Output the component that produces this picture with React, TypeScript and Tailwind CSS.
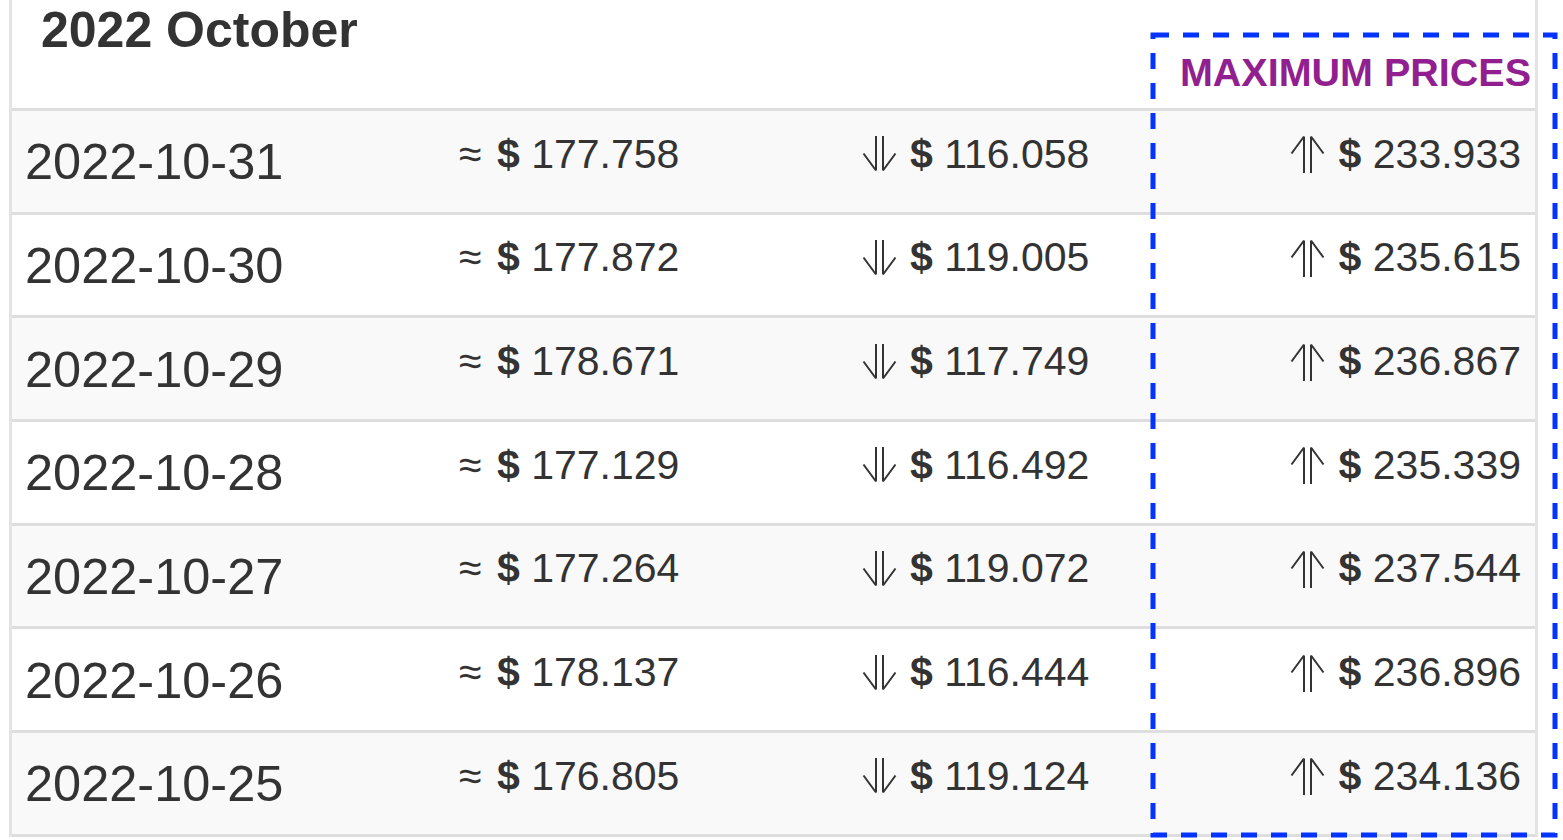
import React from 'react'

type Row = { date: string; avg: string; min: string; max: string }

const rows: Row[] = [
  { date: '2022-10-31', avg: '177.758', min: '116.058', max: '233.933' },
  { date: '2022-10-30', avg: '177.872', min: '119.005', max: '235.615' },
  { date: '2022-10-29', avg: '178.671', min: '117.749', max: '236.867' },
  { date: '2022-10-28', avg: '177.129', min: '116.492', max: '235.339' },
  { date: '2022-10-27', avg: '177.264', min: '119.072', max: '237.544' },
  { date: '2022-10-26', avg: '178.137', min: '116.444', max: '236.896' },
  { date: '2022-10-25', avg: '176.805', min: '119.124', max: '234.136' },
]

function UpArrow() {
  return (
    <svg width="35" height="38" viewBox="0 0 35 38" fill="none" stroke="#333" strokeWidth="2" className="shrink-0">
      <path d="M14 38V1.5M21 38V1.5M14 1.5L1.5 18.5M21 1.5L33.5 18.5" />
    </svg>
  )
}

function DownArrow() {
  return (
    <svg width="35" height="36" viewBox="0 0 35 36" fill="none" stroke="#333" strokeWidth="2" className="shrink-0">
      <path d="M14 0V34.5M21 0V34.5M14 34.5L1.5 17.5M21 34.5L33.5 17.5" />
    </svg>
  )
}

function Price({ value, className = '' }: { value: string; className?: string }) {
  return (
    <span className={className}>
      <b className="font-bold">$</b> {value}
    </span>
  )
}

export default function App() {
  return (
    <div className="relative w-[1563px] h-[840px] overflow-hidden bg-white text-[#333] font-['Liberation_Sans',Arial,sans-serif]">
      <div className="ml-[9px] w-[1529px] border-x-[3px] border-[#e3e3e3]">
        {/* header */}
        <div className="h-[111px] flex justify-between border-b-[3px] border-[#dedede]">
          <h2 className="pl-[29px] pt-[2px] text-[50px] font-bold leading-[1.15]">2022 October</h2>
          <span className="self-end pb-[13px] pr-[4px] text-[39.5px] font-bold leading-[1.15] text-[#921f8f]">
            MAXIMUM PRICES
          </span>
        </div>

        {rows.map((r, i) => (
          <div
            key={r.date}
            className={`h-[103.67px] flex items-center border-b-[3px] border-[#dedede] ${
              i % 2 === 0 ? 'bg-[#f9f9f9]' : 'bg-white'
            }`}
          >
            <div className="w-[447px] pl-[13px] pt-[2px] text-[50.5px] leading-[1.15]">{r.date}</div>
            <div className="w-[403px] pb-[14px] text-[41px] leading-[1.15]">
              ≈ <Price value={r.avg} className="ml-[4px]" />
            </div>
            <div className="flex-1 pb-[14px] flex items-center gap-[13px] text-[41px] leading-[1.15]">
              <DownArrow />
              <Price value={r.min} />
            </div>
            <div className="pr-[14px] pb-[14px] flex items-center gap-[14px] text-[41px] leading-[1.15]">
              <UpArrow />
              <Price value={r.max} />
            </div>
          </div>
        ))}
      </div>

      {/* annotation box around the max column */}
      <svg className="absolute left-[1149px] top-[31px]" width="410" height="808" viewBox="0 0 410 808" fill="none">
        <rect x="4" y="4" width="402" height="800" stroke="#0433ff" strokeWidth="5" strokeDasharray="16 14" />
      </svg>
    </div>
  )
}
